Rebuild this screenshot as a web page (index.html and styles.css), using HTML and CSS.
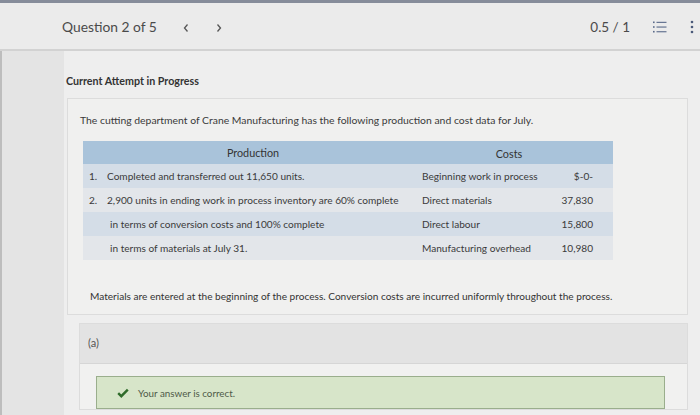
FILE: index.html
```html
<!DOCTYPE html>
<html>
<head>
<meta charset="utf-8">
<link rel="stylesheet" href="styles.css">
</head>
<body>
<header class="topbar">
  <div class="tb-left">
    <span class="qtitle">Question 2 of 5</span>
    <svg class="chev" width="8" height="10" viewBox="0 0 8 10"><path d="M5.5 1.5 L2.5 5 L5.5 8.5" fill="none" stroke="#555" stroke-width="1.3"/></svg>
    <svg class="chev chev2" width="8" height="10" viewBox="0 0 8 10"><path d="M2.5 1.5 L5.5 5 L2.5 8.5" fill="none" stroke="#555" stroke-width="1.3"/></svg>
  </div>
  <div class="tb-right">
    <span class="score">0.5 / 1</span>
    <svg class="listicon" width="16" height="14" viewBox="0 0 16 14"><g fill="#5a6a8a"><rect x="1" y="1.5" width="1.6" height="1.6"/><rect x="1" y="6.2" width="1.6" height="1.6"/><rect x="1" y="10.9" width="1.6" height="1.6"/><rect x="4.5" y="1.8" width="10" height="1.1"/><rect x="4.5" y="6.5" width="10" height="1.1"/><rect x="4.5" y="11.2" width="10" height="1.1"/></g></svg>
    <svg class="kebab" width="4" height="14" viewBox="0 0 4 14"><g fill="#4a5a7a"><circle cx="2" cy="2" r="1.3"/><circle cx="2" cy="7" r="1.3"/><circle cx="2" cy="12" r="1.3"/></g></svg>
  </div>
</header>
<div class="layout">
  <div class="gutter"></div>
  <main class="content">
    <h2 class="attempt">Current Attempt in Progress</h2>
    <section class="card">
      <p class="intro">The cutting department of Crane Manufacturing has the following production and cost data for July.</p>
      <div class="datatable">
        <div class="hd hd-prod">Production</div>
        <div class="hd hd-cost">Costs</div>

        <div class="c prod odd"><span class="num">1.</span>Completed and transferred out 11,650 units.</div>
        <div class="c lbl odd">Beginning work in process</div>
        <div class="c amt odd">$-0-</div>

        <div class="c prod even"><span class="num">2.</span>2,900 units in ending work in process inventory are 60% complete</div>
        <div class="c lbl even">Direct materials</div>
        <div class="c amt even">37,830</div>

        <div class="c prod odd indent">in terms of conversion costs and 100% complete</div>
        <div class="c lbl odd">Direct labour</div>
        <div class="c amt odd">15,800</div>

        <div class="c prod even indent">in terms of materials at July 31.</div>
        <div class="c lbl even">Manufacturing overhead</div>
        <div class="c amt even">10,980</div>
      </div>
      <p class="note">Materials are entered at the beginning of the process. Conversion costs are incurred uniformly throughout the process.</p>
    </section>
    <section class="part">
      <div class="part-head">(a)</div>
      <div class="part-body">
        <div class="correct">
          <svg width="12" height="10" viewBox="0 0 12 10"><path d="M1.2 5.2 L4.3 8.2 L10.8 1.6" fill="none" stroke="#2f6b2a" stroke-width="2.4"/></svg>
          <span>Your answer is correct.</span>
        </div>
      </div>
    </section>
  </main>
</div>
</body>
</html>
```

FILE: styles.css
```css
* { box-sizing: border-box; }
html, body { margin: 0; padding: 0; }
body {
  width: 700px;
  height: 415px;
  overflow: hidden;
  background: #e9e9e9;
  font-family: Lato, "Open Sans", sans-serif;
  color: #3b3b3b;
}
.topbar {
  height: 51px;
  border-top: 3px solid #868c9a;
  border-bottom: 2px solid #d2d2d2;
  background: #ebebeb;
  display: flex;
  align-items: center;
  justify-content: space-between;
  padding: 0 0 0 62px;
}
.tb-left { display: flex; align-items: center; padding-top: 1px; }
.qtitle { font-size: 13.8px; color: #4a4a4a; }
.chev { margin-left: 25px; margin-top: 2px; }
.chev2 { margin-left: 25px; }
.tb-right { display: flex; align-items: center; padding-top: 2px; }
.score { font-size: 13.5px; color: #4a4a4a; margin-right: 22px; }
.listicon { margin-right: 22px; }
.kebab { margin-right: 6px; }

.layout { display: flex; height: 364px; }
.gutter { width: 64px; background: #e4e4e4; border-left: 2px solid #bdbdbd; }
.content {
  flex: 1;
  background: #eeeeee;
  padding: 23px 12px 0 2px;
}
.attempt {
  margin: 0;
  font-size: 10.7px;
  font-weight: 700;
  color: #333;
  line-height: 14px;
}
.card {
  margin: 10px 0 0 1px;
  background: #f0f0ef;
  border: 1px solid #dcdcdc;
  padding: 14px 0 12px 12px;
}
.intro {
  margin: 0;
  font-size: 10.4px;
  line-height: 14px;
  color: #3a3a3a;
}
.datatable {
  margin: 14px 0 0 3px;
  width: 530px;
  display: grid;
  grid-template-columns: 330px 145px 55px;
  font-size: 10.1px;
  color: #3a3a3a;
}
.hd {
  background: #a9c3da;
  height: 23px;
  display: flex;
  align-items: center;
  justify-content: center;
  font-size: 10.8px;
  color: #333;
}
.hd-prod { padding-left: 10px; }
.hd-cost { grid-column: span 2; padding-right: 8px; padding-top: 2px; }
.c {
  height: 24px;
  display: flex;
  align-items: center;
  white-space: nowrap;
}
.odd { background: #d4dde7; }
.even { background: #e3e6ea; }
.prod { padding-left: 6px; }
.num { width: 18px; display: inline-block; }
.indent { padding-left: 27px; }
.lbl { padding-left: 9px; }
.amt { justify-content: flex-end; padding-right: 20px; }
.note {
  margin: 30px 0 0 10px;
  font-size: 10.1px;
  line-height: 12px;
  color: #333;
}
.part {
  margin: 8px 0 0 13px;
  border: 1px solid #dcdcdc;
  background: #f1f1f0;
}
.part-head {
  height: 40px;
  background: #e3e3e3;
  border-bottom: 1px solid #d6d6d6;
  font-size: 11px;
  color: #555;
  padding: 12px 0 0 8px;
}
.part-body { padding: 12px 22px 0 16px; }
.correct {
  height: 33px;
  background: #d7e5c9;
  border: 1px solid #9aae8c;
  display: flex;
  align-items: center;
  padding-left: 20px;
  font-size: 9.8px;
  color: #4e5a48;
}
.correct svg { margin-right: 9px; }
```
